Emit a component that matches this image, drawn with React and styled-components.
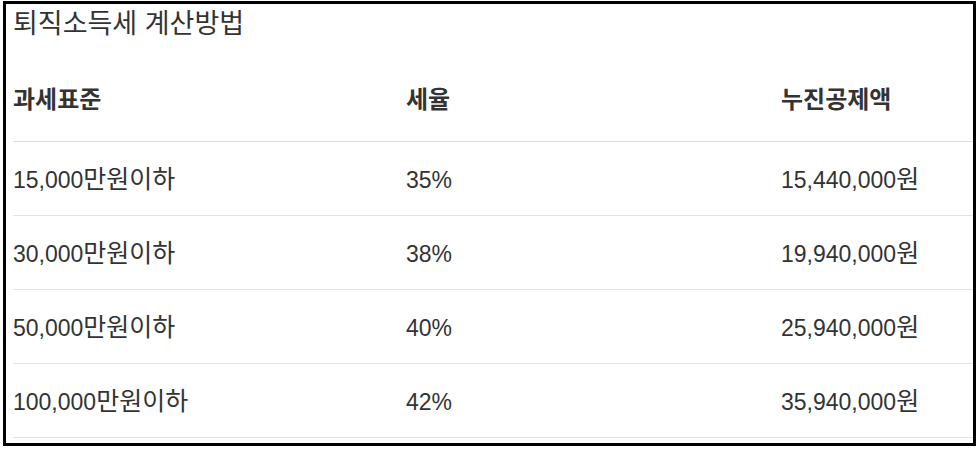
import styled, { createGlobalStyle } from 'styled-components'

const GlobalStyle = createGlobalStyle`
  body {
    margin: 0;
    background: #fff;
    font-family: "Liberation Sans", "Noto Sans CJK KR", sans-serif;
    color: #333;
  }
`

const Frame = styled.div`
  box-sizing: border-box;
  width: 973px;
  height: 445px;
  margin: 1px 0 0 3px;
  border: 3px solid #000;
  padding-left: 7px;
  overflow: hidden;
`

const Title = styled.h3`
  margin: 0;
  font-size: 27px;
  font-weight: normal;
  line-height: 40px;
  color: #333;
`

const Table = styled.div`
  margin-top: 14px;
  width: 960px;
`

const Row = styled.div`
  display: grid;
  grid-template-columns: 393px 375px 1fr;
  align-items: center;
  box-sizing: border-box;
  height: ${p => (p.head ? 84 : 74)}px;
  padding-top: ${p => (p.head ? 0 : 2)}px;
  border-bottom: 1px solid ${p => (p.head ? '#ddd' : '#e3e3e3')};
`

const Cell = styled.div`
  font-size: ${p => (p.head ? 24 : 23)}px;
  font-weight: ${p => (p.head ? 'bold' : 'normal')};
  line-height: 32px;
  color: #333;
  white-space: nowrap;
`

const Ko = styled.span`
  font-size: 25px;
  line-height: 1;
`

const rows = [
  ['15,000', '만원이하', '35%', '15,440,000'],
  ['30,000', '만원이하', '38%', '19,940,000'],
  ['50,000', '만원이하', '40%', '25,940,000'],
  ['100,000', '만원이하', '42%', '35,940,000']
]

const App = () => (
  <>
    <GlobalStyle />
    <Frame>
      <Title>퇴직소득세 계산방법</Title>
      <Table>
        <Row head>
          <Cell head>과세표준</Cell>
          <Cell head>세율</Cell>
          <Cell head>누진공제액</Cell>
        </Row>
        {rows.map(r => (
          <Row key={r[0]}>
            <Cell>{r[0]}<Ko>{r[1]}</Ko></Cell>
            <Cell>{r[2]}</Cell>
            <Cell>{r[3]}<Ko>원</Ko></Cell>
          </Row>
        ))}
      </Table>
    </Frame>
  </>
)

export default App
